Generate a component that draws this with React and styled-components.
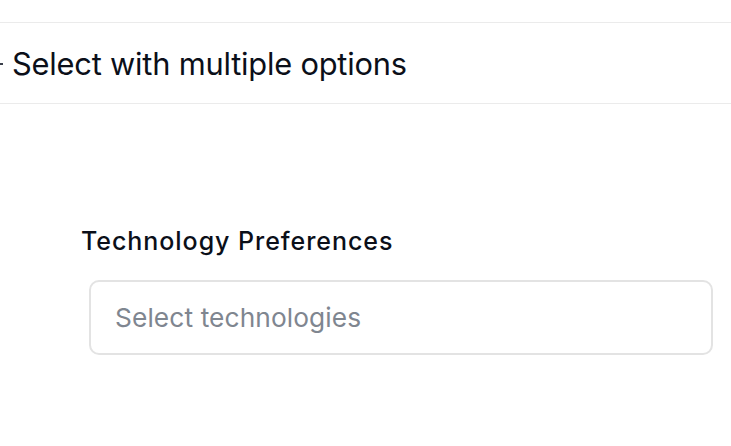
import React from "react";
import styled, { createGlobalStyle } from "styled-components";

const GlobalStyle = createGlobalStyle`
  html, body {
    margin: 0;
    padding: 0;
    background: #ffffff;
    font-family: "Inter", "Liberation Sans", sans-serif;
    color: #0b0f19;
    overflow: hidden;
  }
`;

const Page = styled.div`
  width: 731px;
  height: 446px;
  padding-top: 22px;
  box-sizing: border-box;
`;

const SectionHeader = styled.div`
  position: relative;
  border-top: 1px solid #ebebeb;
  border-bottom: 1px solid #ebebeb;
  height: 80px;
  display: flex;
  align-items: center;
  padding-left: 12px;

  /* tail of the list marker that runs off the left edge */
  &::before {
    content: "";
    position: absolute;
    left: 0;
    top: 40px;
    width: 3px;
    height: 2px;
    background: #3a3f4a;
  }
`;

const SectionTitle = styled.h2`
  margin: 0;
  font-size: 30.8px;
  font-weight: 400;
  letter-spacing: -0.2px;
  color: #0b0f19;
`;

const Demo = styled.div`
  padding: 122px 18px 0 81px;
  display: flex;
  flex-direction: column;
  gap: 24px;
`;

const Label = styled.label`
  font-size: 25px;
  font-weight: 500;
  letter-spacing: 0.95px;
  color: #0b0f19;
  line-height: 30px;
`;

const SelectBox = styled.div`
  margin-left: 8px;
  height: 75px;
  border: 2px solid #e3e3e3;
  border-radius: 10px;
  box-sizing: border-box;
  display: flex;
  align-items: center;
  padding: 0 24px;
`;

const Placeholder = styled.span`
  font-size: 26.3px;
  letter-spacing: 0.1px;
  color: #7f8690;
`;

export default function App() {
  return (
    <>
      <GlobalStyle />
      <Page>
        <SectionHeader>
          <SectionTitle>Select with multiple options</SectionTitle>
        </SectionHeader>
        <Demo>
          <Label>Technology Preferences</Label>
          <SelectBox>
            <Placeholder>Select technologies</Placeholder>
          </SelectBox>
        </Demo>
      </Page>
    </>
  );
}
